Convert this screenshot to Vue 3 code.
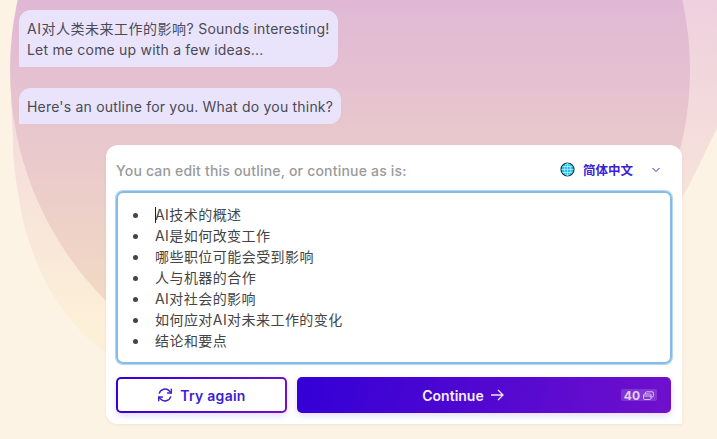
<template>
  <div class="page">
    <svg class="backdrop" width="717" height="439" viewBox="0 0 717 439">
      <defs>
        <linearGradient id="outerFill" gradientUnits="userSpaceOnUse" x1="0" y1="0" x2="0" y2="330">
          <stop offset="0" stop-color="#eed0de" />
          <stop offset="1" stop-color="#fdf0d8" />
        </linearGradient>
        <linearGradient id="innerFill" gradientUnits="userSpaceOnUse" x1="0" y1="0" x2="0" y2="320">
          <stop offset="0" stop-color="#e0b8d5" />
          <stop offset="1" stop-color="#f3dcc2" />
        </linearGradient>
      </defs>
      <path d="M100 0 L11 90 C11 110 13 130 13 143 C13 165 17 190 23 220 C35 270 60 320 106 353 L400 380 L682 198 C695 175 706 150 717 128 V0 Z" fill="url(#outerFill)" />
      <ellipse cx="350" cy="70" rx="340" ry="332" fill="url(#innerFill)" />
    </svg>

    <div class="chat">
      <div class="bubble">
        <span class="cjk">AI对人类未来工作的影响?</span> Sounds interesting!<br />
        Let me come up with a few ideas...
      </div>
      <div class="bubble">Here's an outline for you. What do you think?</div>

      <div class="card">
        <div class="card-head">
          <span class="hint">You can edit this outline, or continue as is:</span>
          <div class="lang">
            <svg class="globe" width="15" height="15" viewBox="0 0 15 15">
              <circle cx="7.5" cy="7.5" r="6.5" fill="#1fc0f0" stroke="#1c3440" stroke-width="1.2" />
              <g fill="none" stroke="#c6eefb" stroke-width="0.7">
                <ellipse cx="7.5" cy="7.5" rx="3" ry="6" />
                <path d="M7.5 1.5 V13.5 M1.5 7.5 H13.5 M2.5 4.5 H12.5 M2.5 10.5 H12.5" />
              </g>
            </svg>
            <span class="lang-name">简体中文</span>
            <svg class="chevron" width="10" height="6" viewBox="0 0 10 6">
              <path d="M1.5 1 L5 4.5 L8.5 1" fill="none" stroke="#3a1fd6" stroke-width="1" />
            </svg>
          </div>
        </div>

        <div class="outline">
          <ul>
            <li v-for="(item, i) in items" :key="item">
              <span v-if="i === 0" class="caret"></span>{{ item }}
            </li>
          </ul>
        </div>

        <div class="actions">
          <button class="btn-retry">
            <span class="btn-retry-inner">
              <svg width="16" height="16" viewBox="0 0 16 16" fill="none" stroke="#3a1fd6" stroke-width="1.4">
                <path d="M2.2 6.6 A6 6 0 0 1 12.6 4.2 L14 5.8" />
                <path d="M14.3 1.8 V6 H10.1" />
                <path d="M13.8 9.4 A6 6 0 0 1 3.4 11.8 L2 10.2" />
                <path d="M1.7 14.2 V10 H5.9" />
              </svg>
              Try again
            </span>
          </button>
          <button class="btn-continue">
            <span class="continue-label">
              Continue
              <svg width="14" height="12" viewBox="0 0 14 12" fill="none" stroke="#f1e6fb" stroke-width="1.3">
                <path d="M1 6 H13 M8 1 L13 6 L8 11" />
              </svg>
            </span>
            <span class="cost">
              40
              <svg width="11" height="9" viewBox="0 0 11 9" fill="none" stroke="#e3d0f5" stroke-width="0.9">
                <rect x="0.5" y="3" width="7.5" height="5.5" rx="1.2" />
                <path d="M2.5 3 V2 Q2.5 0.8 3.7 0.8 H9 Q10.4 0.8 10.4 2 V4.8 Q10.4 6 9 6 H8" />
                <path d="M0.5 5 H8" />
              </svg>
            </span>
          </button>
        </div>
      </div>
    </div>
  </div>
</template>

<script setup>
const items = [
  'AI技术的概述',
  'AI是如何改变工作',
  '哪些职位可能会受到影响',
  '人与机器的合作',
  'AI对社会的影响',
  '如何应对AI对未来工作的变化',
  '结论和要点'
]
</script>

<style>
html, body { margin: 0; background: #fdf3e4; }
</style>

<style scoped>
.page {
  position: relative;
  width: 717px;
  height: 439px;
  overflow: hidden;
  background: #fdf3e4;
  font-family: Inter, "Noto Sans CJK SC", sans-serif;
  font-size: 14px;
  letter-spacing: 0.2px;
  color: #4a4a55;
}
.backdrop { position: absolute; left: 0; top: 0; }
.chat {
  position: relative;
  display: flex;
  flex-direction: column;
  align-items: flex-start;
  padding: 10px 35px 0 19px;
}
.bubble {
  background: #e9e4fc;
  border-radius: 12px 12px 12px 0;
  padding: 7.5px 8px;
  line-height: 21px;
  margin-bottom: 21px;
  white-space: nowrap;
}
.cjk { letter-spacing: 0.5px; }
.card {
  align-self: flex-end;
  box-sizing: border-box;
  width: 576px;
  height: 279px;
  background: #fff;
  border-radius: 12px 12px 0 12px;
  box-shadow: 0 1px 3px rgba(160, 130, 100, 0.12);
  padding: 0 10px;
  display: flex;
  flex-direction: column;
}
.card-head {
  box-sizing: border-box;
  height: 46px;
  padding-top: 4px;
  display: flex;
  align-items: center;
  justify-content: space-between;
}
.hint { color: #9a9a9a; font-weight: 500; }
.lang { display: flex; align-items: center; margin-right: 11px; margin-bottom: 2px; }
.globe { margin-right: 8px; }
.lang-name { color: #3a1fd6; font-weight: 600; font-size: 12.5px; letter-spacing: 0; margin-right: 18px; }
.chevron { margin-top: 2px; }
.outline {
  box-sizing: border-box;
  height: 173px;
  border: 2px solid #85bbe8;
  box-shadow: 0 0 0 1px rgba(133, 187, 232, 0.6);
  border-radius: 7px;
  padding: 11px 0 0;
  color: #444;
  letter-spacing: 0.45px;
}
.outline ul { margin: 0; padding-left: 37px; line-height: 21px; list-style: none; }
.outline li { position: relative; height: 21px; }
.outline li::before {
  content: "";
  position: absolute;
  left: -22px;
  top: 9px;
  width: 5px;
  height: 5px;
  border-radius: 50%;
  background: #444;
}
.caret {
  display: inline-block;
  width: 1px;
  height: 16px;
  background: #222;
  vertical-align: -3px;
  margin-right: -1px;
}
.actions { display: flex; gap: 10px; margin-top: 13px; margin-right: 1px; }
button {
  height: 36px;
  border: 0;
  border-radius: 5px;
  font-family: inherit;
  font-size: 14px;
  font-weight: 600;
  cursor: pointer;
  box-shadow: 0 3px 6px rgba(80, 30, 180, 0.15);
}
.btn-retry {
  width: 171px;
  padding: 2px;
  background: linear-gradient(100deg, #3300d6, #7010cc);
}
.btn-retry-inner {
  box-sizing: border-box;
  display: flex;
  align-items: center;
  justify-content: center;
  gap: 7px;
  height: 100%;
  border-radius: 3px;
  background: #fff;
  color: #3a1fd6;
  letter-spacing: 0.25px;
}
.btn-continue {
  position: relative;
  flex: 1;
  background: linear-gradient(100deg, #3300d6, #7010cc);
  color: #f4eefc;
}
.continue-label { display: inline-flex; align-items: center; gap: 6px; padding-right: 42px; }
.cost {
  position: absolute;
  right: 14px;
  top: 12px;
  height: 12px;
  padding: 0 3px;
  display: flex;
  align-items: center;
  gap: 3px;
  border-radius: 2px;
  background: rgba(255, 255, 255, 0.16);
  color: #e3d0f5;
  font-size: 12px;
  font-weight: 700;
}
</style>
